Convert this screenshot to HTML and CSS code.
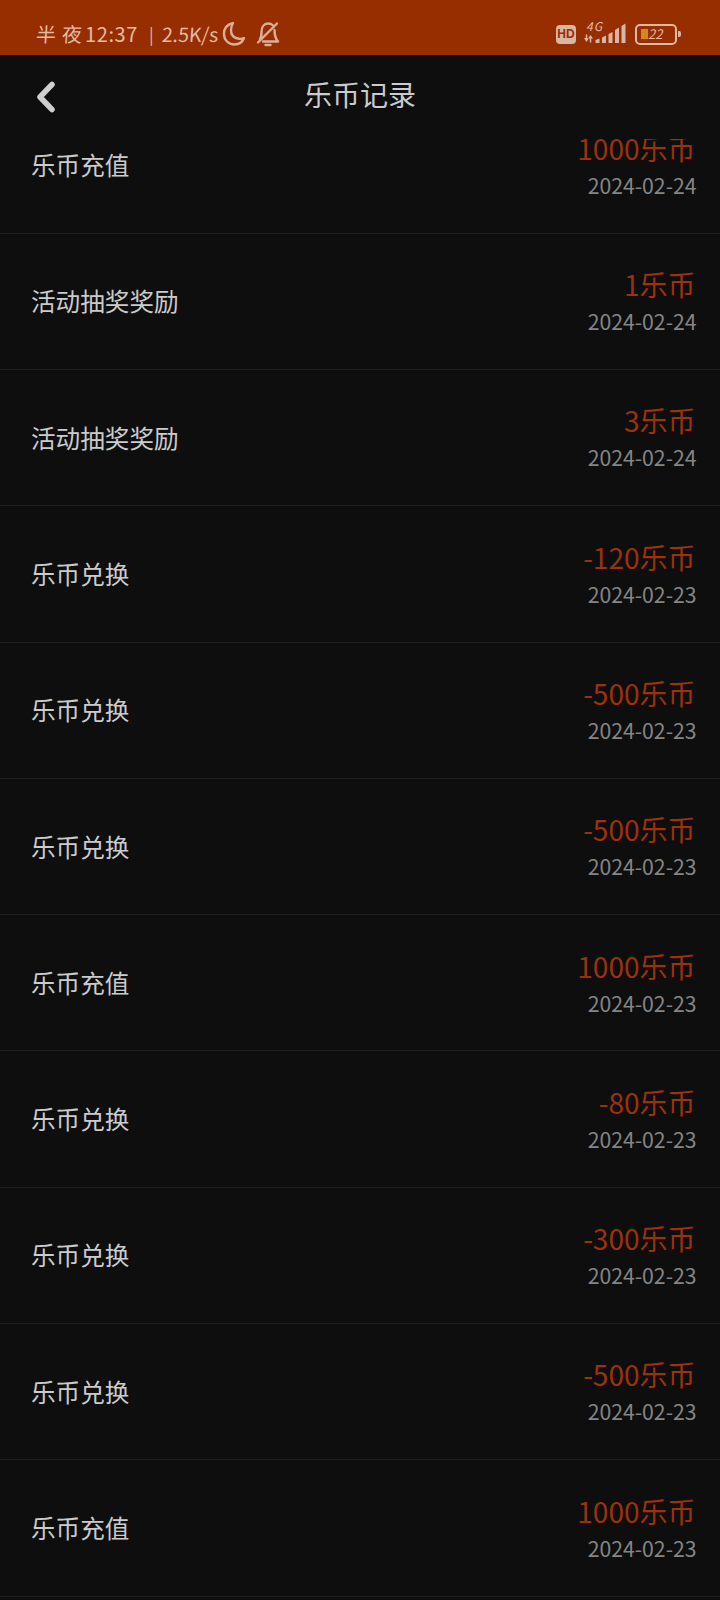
FILE: index.html
```
<!DOCTYPE html>
<html lang="zh-CN">
<head>
    <meta charset="UTF-8">
    <meta name="viewport" content="width=device-width, initial-scale=1.0">
    <title>乐币记录</title>
    <link rel="stylesheet" href="styles.css">
</head>
<body>
    <div class="status-bar">
        <div class="status-left">
            <span class="period">半夜</span>
            <span class="clock">12:37</span>
            <span class="separator">|</span>
            <span class="speed">2.5K/s</span>
            <svg class="moon" width="24" height="26" viewBox="0 0 24 26">
                <path d="M11 2C5 3.500 2 8 2 13c0 6 4.500 10.500 10.500 10.500 4.500 0 8-2.500 9.500-6.500-2 .8-3.500 1-5 .8C12 17.200 9 14 9 9.500c0-3 .8-5.500 2-7.500z"/>
            </svg>
            <svg class="mute" width="24" height="26" viewBox="0 0 24 26">
                <path d="M4 18c1.500-2 1.500-4 1.500-7C5.500 6 8 2.500 12 2.500c2 0 3.500.5 4.500 1.500M18.500 9c0 5 .5 8 3.500 11.500H7M21 2.500L2 21.500"/>
                <path d="M9.500 24h5"/>
            </svg>
        </div>
        <div class="status-right">
            <span class="hd">HD</span>
            <div class="network">
                <span class="network-type">4G</span>
                <svg width="42" height="22" viewBox="0 0 42 22">
                    <path class="arrows" d="M2.500 12v5M6.500 14v5"/>
                    <path class="solid" d="M0 15h5l-2.500 4zM4 15.500h5L6.500 12zM11.500 17l4-1.500V20h-4zM18 14.500l4-2V20h-4zM24.500 11l4-2V20h-4zM31 7l4-2.500V20h-4zM37.500 3l4-2.500V20h-4z"/>
                </svg>
            </div>
            <div class="battery"><span class="battery-level"></span><span class="battery-num">22</span></div>
            <span class="battery-tip"></span>
        </div>
    </div>
    <header class="header">
        <svg class="back" width="20" height="32" viewBox="0 0 20 32">
            <path d="M16 3.500L4 16l12 12.500"/>
        </svg>
        <h1>乐币记录</h1>
    </header>
    <main class="records">
        <ul class="record-list">
            <li class="record"><span class="name">乐币充值</span><div class="detail"><p class="amount">1000乐币</p><p class="date">2024-02-24</p></div></li>
            <li class="record"><span class="name">活动抽奖奖励</span><div class="detail"><p class="amount">1乐币</p><p class="date">2024-02-24</p></div></li>
            <li class="record"><span class="name">活动抽奖奖励</span><div class="detail"><p class="amount">3乐币</p><p class="date">2024-02-24</p></div></li>
            <li class="record"><span class="name">乐币兑换</span><div class="detail"><p class="amount">-120乐币</p><p class="date">2024-02-23</p></div></li>
            <li class="record"><span class="name">乐币兑换</span><div class="detail"><p class="amount">-500乐币</p><p class="date">2024-02-23</p></div></li>
            <li class="record"><span class="name">乐币兑换</span><div class="detail"><p class="amount">-500乐币</p><p class="date">2024-02-23</p></div></li>
            <li class="record"><span class="name">乐币充值</span><div class="detail"><p class="amount">1000乐币</p><p class="date">2024-02-23</p></div></li>
            <li class="record"><span class="name">乐币兑换</span><div class="detail"><p class="amount">-80乐币</p><p class="date">2024-02-23</p></div></li>
            <li class="record"><span class="name">乐币兑换</span><div class="detail"><p class="amount">-300乐币</p><p class="date">2024-02-23</p></div></li>
            <li class="record"><span class="name">乐币兑换</span><div class="detail"><p class="amount">-500乐币</p><p class="date">2024-02-23</p></div></li>
            <li class="record"><span class="name">乐币充值</span><div class="detail"><p class="amount">1000乐币</p><p class="date">2024-02-23</p></div></li>
        </ul>
    </main>
</body>
</html>
```
FILE: styles.css
```
* {
    padding: 0;
    margin: 0;
    box-sizing: border-box;
}
body {
    display: flex;
    flex-direction: column;
    height: 1600px;
    overflow: hidden;
    background-color: #0e0e0e;
    color: #cbcbcb;
    font-family: "Noto Sans CJK SC", sans-serif;
}
svg {
    display: block;
    fill: none;
    stroke-linecap: round;
    stroke-linejoin: round;
}

/* status bar */
.status-bar {
    display: flex;
    justify-content: space-between;
    height: 55px;
    padding: 20px 39px 0 36px;
    background-color: #962e00;
    color: #e6b9a6;
}
.status-left, .status-right {
    display: flex;
    align-items: center;
    height: 28px;
}
.status-left {
    line-height: 28px;
    font-weight: 400;
}
.status-left span {
    white-space: nowrap;
}
.status-left svg {
    stroke: #dcae9a;
    stroke-width: 2.4;
}
.period {
    width: 49px;
    font-size: 20px;
    letter-spacing: 6px;
    transform: skewX(-4deg);
}
.clock {
    width: 64px;
    font-size: 20px;
    letter-spacing: 0.6px;
}
.separator {
    width: 13px;
    font-size: 17px;
}
.speed {
    width: 60px;
    font-size: 19.5px;
    transform: skewX(-4deg);
}
.moon {
    margin-right: 10px;
}
.hd {
    width: 20px;
    height: 19px;
    margin-right: 8px;
    border-radius: 4px;
    background-color: #d9b5a5;
    color: #962e00;
    font: bold 12px/19px "Liberation Sans", sans-serif;
    text-align: center;
}
.network {
    position: relative;
    width: 42px;
    margin-right: 9px;
}
.network .solid {
    fill: #d9b5a5;
}
.network .arrows {
    stroke: #d9b5a5;
    stroke-width: 1.5;
}
.network-type {
    position: absolute;
    top: -3px;
    left: 2px;
    font-size: 12px;
    line-height: 12px;
    font-style: italic;
    letter-spacing: 1px;
}
.battery {
    display: flex;
    align-items: center;
    width: 42px;
    height: 21px;
    padding-left: 4px;
    border: 2px solid #e0b6a4;
    border-radius: 5px;
}
.battery-level {
    width: 7px;
    height: 10px;
    background-color: #d48a14;
}
.battery-num {
    font-size: 13px;
    line-height: 14px;
    font-style: italic;
}
.battery-tip {
    width: 3px;
    height: 6px;
    margin-left: 1px;
    border-radius: 0 2px 2px 0;
    background-color: #d9b5a5;
}

/* title */
.header {
    display: grid;
    grid-template-columns: 100px 1fr 100px;
    align-items: center;
    height: 84px;
    flex: none;
}
.back {
    margin: 0 0 1px 36px;
    stroke: #cfcfcf;
    stroke-width: 5.5;
}
.header h1 {
    padding-bottom: 7px;
    font-size: 28px;
    line-height: 40px;
    font-weight: 400;
    text-align: center;
}

/* records */
.records {
    flex: 1;
    overflow: hidden;
}
.record-list {
    margin-top: -41.6px;
    list-style: none;
}
.record {
    display: flex;
    justify-content: space-between;
    align-items: center;
    height: 136.3px;
    padding: 0 23.5px 0 31px;
    border-bottom: 1px solid #202020;
}
.name {
    padding-bottom: 2px;
    font-size: 24.6px;
    line-height: 36px;
}
.detail {
    padding-bottom: 0.6px;
    text-align: right;
}
.amount {
    padding-right: 1px;
    color: #9c310c;
    font-size: 28px;
    line-height: 40px;
}
.date {
    color: #858585;
    font-size: 21.2px;
    line-height: 34px;
}
```
